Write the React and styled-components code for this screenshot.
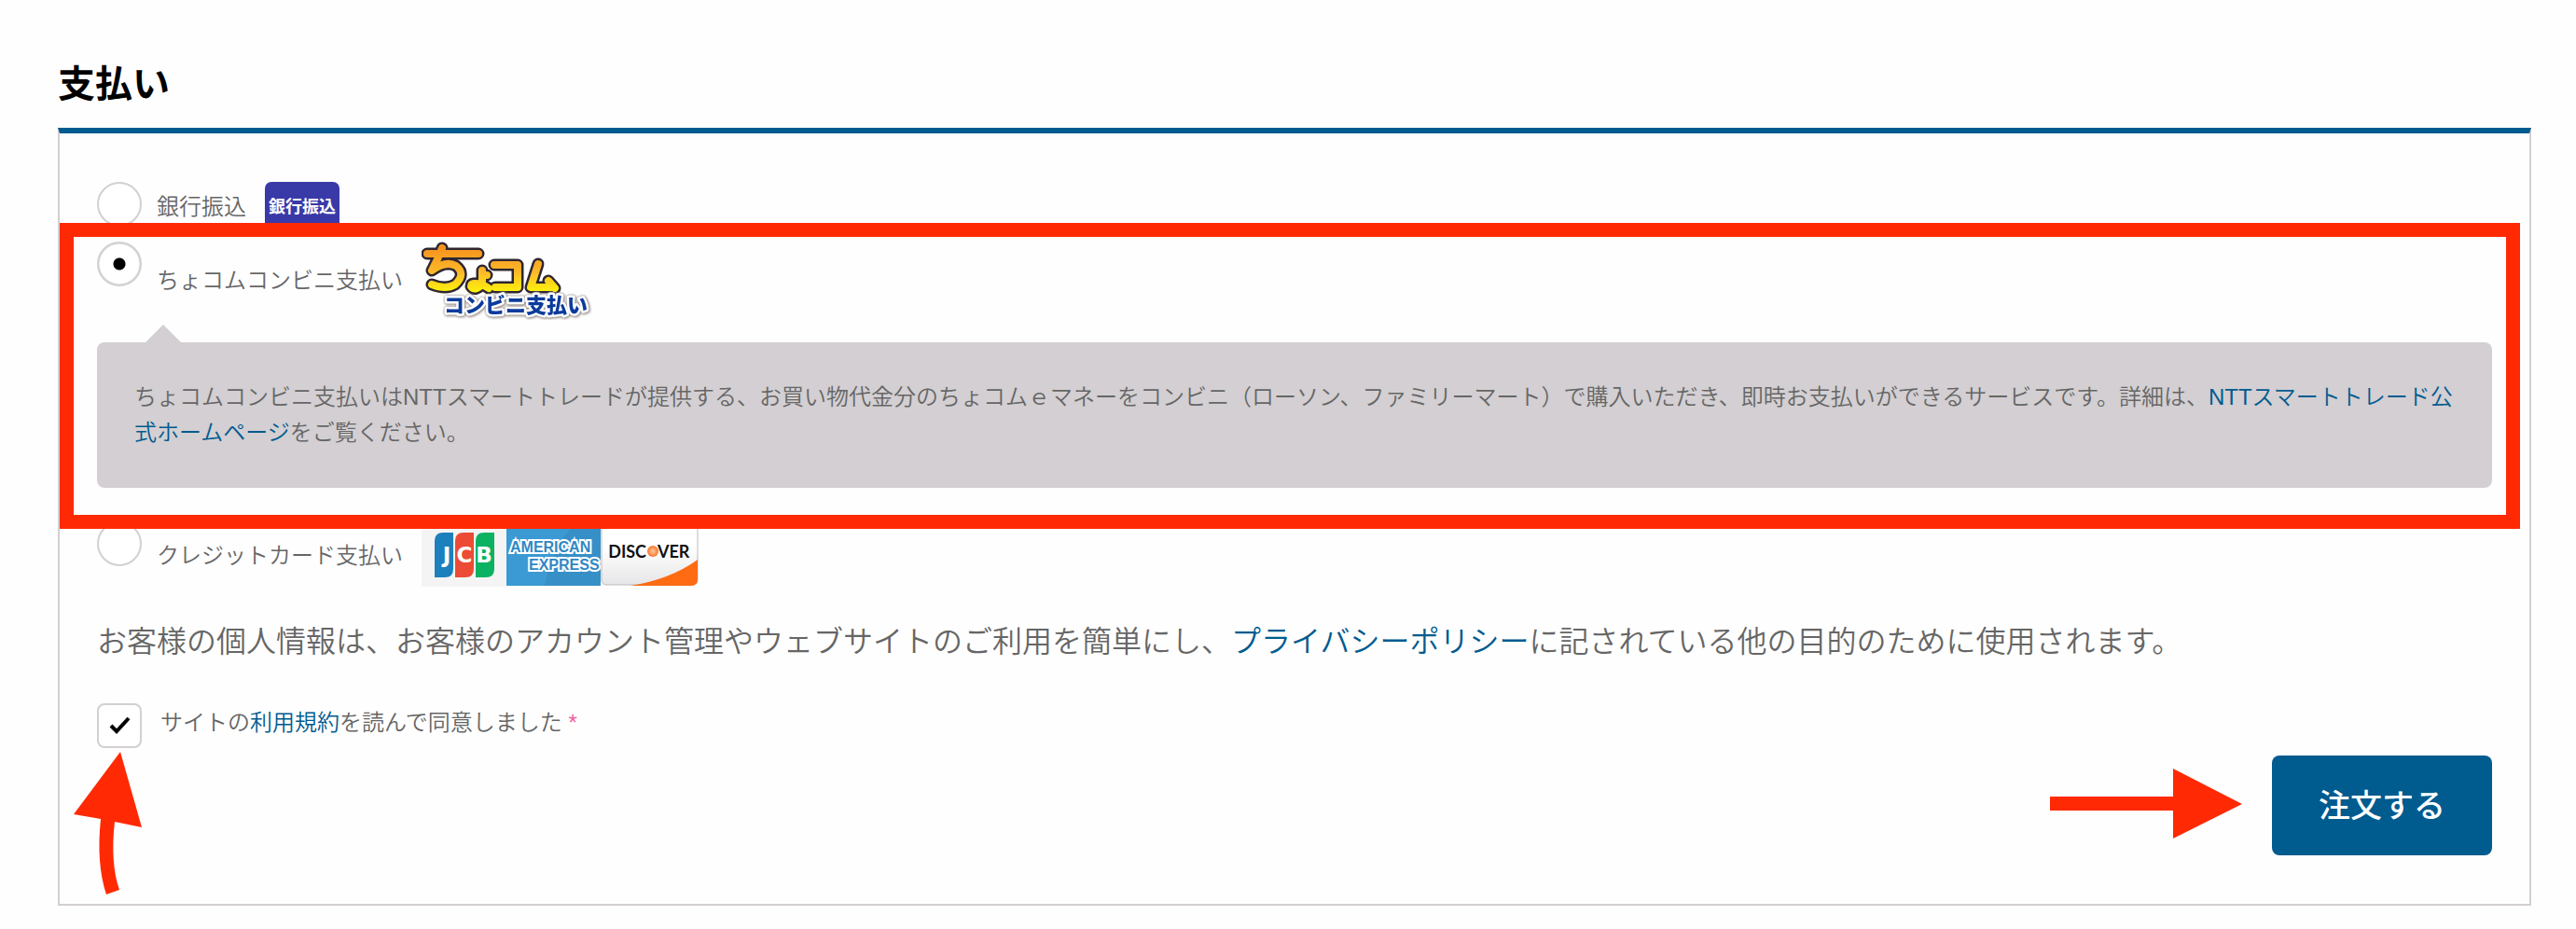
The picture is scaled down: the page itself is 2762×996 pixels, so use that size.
import React, { useState } from 'react';
import styled, { createGlobalStyle } from 'styled-components';

const GlobalStyle = createGlobalStyle`
  * {
    box-sizing: border-box;
  }
  body {
    margin: 0;
    background: #fefefe;
    color: #666;
    font-family: "Liberation Sans", "Noto Sans CJK JP", sans-serif;
    font-size: 24px;
    font-weight: 350;
    line-height: 38px;
  }
`;

const Page = styled.main`
  padding: 60px 48px 24px 62px;
`;

const Title = styled.h2`
  margin: 0 0 17px;
  color: #000;
  font-size: 40px;
  font-weight: 700;
  line-height: 60px;
`;

const Panel = styled.form`
  padding: 52px 40px;
  border: 2px solid #d3cfd2;
  border-top: 6px solid #005b8f;
`;

const Option = styled.div`
  position: relative;
  margin-bottom: ${props => props.$gap}px;
`;

const OptionRow = styled.div`
  display: flex;
  align-items: flex-start;
  gap: 16px;
`;

const OptionLabel = styled.label`
  display: flex;
  align-items: center;
  gap: 20px;
  > svg {
    display: block;
  }
`;

const Radio = styled.input`
  appearance: none;
  flex: none;
  width: 48px;
  height: 48px;
  margin: 0;
  border: 2px solid #d3cfd2;
  border-radius: 50%;
  background: #fff;
  &:checked {
    background: radial-gradient(circle, #000 6px, #fff 7px);
    box-shadow: inset 0 0 1px #777;
  }
`;

const Bubble = styled.div`
  position: relative;
  margin-top: 24px;
  padding: 40px;
  border-radius: 8px;
  background: #d3cfd2;
  > p {
    margin: 0;
  }
  &::before {
    content: "";
    position: absolute;
    top: -19px;
    left: 52px;
    border: 19px solid transparent;
    border-top: 0;
    border-bottom-color: #d3cfd2;
  }
`;

const Link = styled.a`
  color: #005b8f;
  text-decoration: none;
`;

const Highlight = styled.div`
  position: absolute;
  inset: -20px -30px -44px -40px;
  z-index: 1;
  border: 15px solid #ff2a04;
  pointer-events: none;
`;

const Cards = styled.span`
  display: flex;
  > svg {
    display: block;
  }
`;

const Privacy = styled.p`
  margin: 0 0 42px;
  font-size: 32px;
  line-height: 48px;
`;

const Agreement = styled.div`
  display: flex;
  align-items: flex-start;
  gap: 20px;
  margin-bottom: 8px;
`;

const AgreementLabel = styled.label`
  padding-top: 2px;
`;

const CheckWrap = styled.span`
  position: relative;
  flex: none;
  width: 48px;
  height: 48px;
`;

const Checkbox = styled.input`
  appearance: none;
  display: block;
  width: 100%;
  height: 100%;
  margin: 0;
  border: 2px solid #d3cfd2;
  border-radius: 8px;
  background: #fff;
`;

const CheckMark = styled.svg`
  position: absolute;
  top: 0;
  left: 0;
  pointer-events: none;
`;

const CurvedArrow = styled.svg`
  position: absolute;
  top: 52px;
  left: -26px;
  pointer-events: none;
`;

const Required = styled.span`
  color: #ef5b9c;
`;

const Actions = styled.div`
  display: flex;
  justify-content: flex-end;
  align-items: center;
  gap: 32px;
`;

const OrderButton = styled.button`
  height: 107px;
  padding: 0 50px 4px;
  border: 0;
  border-radius: 8px;
  background: #005b8f;
  color: #fff;
  font-family: inherit;
  font-size: 34px;
  font-weight: 500;
`;

const LogoCaption = styled.text`
  font-size: 22px;
  font-weight: 900;
  fill: #0b3b9c;
  stroke: #fff;
  stroke-width: 5px;
  stroke-linejoin: round;
  paint-order: stroke;
  filter: drop-shadow(0 0 1px #8c8480) drop-shadow(1px 1px 1px #a8a09c);
`;

const BankBadge = () => (
  <svg width="80" height="53" viewBox="0 0 80 53">
    <rect width="80" height="53" rx="7" fill="#3a39a8" />
    <text x="40" y="33" fontSize="18" fontWeight="700" fill="#fff" textAnchor="middle">銀行振込</text>
  </svg>
);

const ChocomLogo = () => (
  <svg width="184" height="84" viewBox="0 0 184 84">
    <defs>
      <linearGradient id="gold" gradientUnits="userSpaceOnUse" x1="0" y1="6" x2="0" y2="54">
        <stop offset="0" stopColor="#f7921e" />
        <stop offset="0.55" stopColor="#fbb829" />
        <stop offset="1" stopColor="#fdf20c" />
      </linearGradient>
    </defs>
    <g fill="none" strokeLinecap="round" strokeLinejoin="round">
      {[['#2e2630', 13], ['url(#gold)', 8]].map(([color, width]) => (
        <g key={color} stroke={color} strokeWidth={width}>
          <path d="M6 13H61M22 7Q17 20 11 31Q26 20 37 26Q48 35 36 46Q26 52 11 46" />
          <path d="M65 31V46Q53 43 53 48Q57 54 65 46M65 36H70M65 46Q69 48 72 50" />
          <path d="M78 25H103V49H79" />
          <path d="M125 24L117 49H142M136 42L143 50" />
        </g>
      ))}
    </g>
    <LogoCaption x="24" y="76">コンビニ支払い</LogoCaption>
  </svg>
);

const CardLogos = () => (
  <Cards>
    <svg width="91" height="74" viewBox="0 0 91 74">
      <rect width="91" height="70" fill="#f4f4f4" />
      <path d="M23 12H34V51Q34 60 25 60H14V21Q14 12 23 12Z" fill="#1c80bd" />
      <path d="M45 12H56V51Q56 60 47 60H36V21Q36 12 45 12Z" fill="#ec4b35" />
      <path d="M67 12H78V51Q78 60 69 60H58V21Q58 12 67 12Z" fill="#0bb262" />
      <g fontFamily="DejaVu Sans" fontSize="23" fontWeight="700" fill="#fff" textAnchor="middle">
        <text x="27" y="44">J</text>
        <text x="46" y="44">C</text>
        <text x="67" y="44">B</text>
      </g>
    </svg>
    <svg width="101" height="74" viewBox="0 0 101 74">
      <rect width="101" height="69" fill="#3b99d3" />
      <path d="M101 0V69H41Q50 24 76 0Z" fill="#378fc7" />
      <g fontSize="16" fontWeight="700" fill="#2f88c4" stroke="#fff" strokeWidth="4" paintOrder="stroke">
        <text x="4" y="33">AMERICAN</text>
        <text x="24" y="52">EXPRESS</text>
      </g>
    </svg>
    <svg width="105" height="74" viewBox="0 0 105 74">
      <defs>
        <linearGradient id="silver" x1="0" y1="0" x2="0" y2="1">
          <stop offset="0.4" stopColor="#fff" />
          <stop offset="1" stopColor="#e6e6e8" />
        </linearGradient>
        <radialGradient id="orange">
          <stop offset="0" stopColor="#ffc9a0" />
          <stop offset="1" stopColor="#f9752a" />
        </radialGradient>
      </defs>
      <rect x="1" y="1" width="103" height="67" rx="5" fill="url(#silver)" stroke="#bbb" />
      <path d="M104 41V62Q104 69 97 69H32Q75 62 104 41Z" fill="#ff6b12" />
      <g fontFamily="Lato" fontSize="18" fontWeight="700" fill="#111">
        <text x="49" y="39" textAnchor="end">DISC</text>
        <text x="61" y="39">VER</text>
      </g>
      <circle cx="56" cy="32" r="6" fill="url(#orange)" />
    </svg>
  </Cards>
);

export default function App() {
  const [method, setMethod] = useState('chocom');
  const [agreed, setAgreed] = useState(true);

  const radioProps = (value) => ({
    type: 'radio',
    name: 'payment',
    id: value,
    checked: method === value,
    onChange: () => setMethod(value),
  });

  return (
    <Page lang="ja">
      <GlobalStyle />
      <Title>支払い</Title>
      <Panel onSubmit={(e) => e.preventDefault()}>
        <Option $gap={11}>
          <OptionRow>
            <Radio {...radioProps('bank')} />
            <OptionLabel htmlFor="bank">銀行振込<BankBadge /></OptionLabel>
          </OptionRow>
        </Option>

        <Option $gap={36}>
          <OptionRow>
            <Radio {...radioProps('chocom')} />
            <OptionLabel htmlFor="chocom">ちょコムコンビニ支払い<ChocomLogo /></OptionLabel>
          </OptionRow>
          <Bubble>
            <p>
              ちょコムコンビニ支払いはNTTスマートトレードが提供する、お買い物代金分のちょコムｅマネーをコンビニ（ローソン、ファミリーマート）で購入いただき、即時お支払いができるサービスです。詳細は、<Link href="#ntt">NTTスマートトレード公式ホームページ</Link>をご覧ください。
            </p>
          </Bubble>
          <Highlight />
        </Option>

        <Option $gap={31}>
          <OptionRow>
            <Radio {...radioProps('card')} />
            <OptionLabel htmlFor="card">クレジットカード支払い<CardLogos /></OptionLabel>
          </OptionRow>
        </Option>

        <Privacy>
          お客様の個人情報は、お客様のアカウント管理やウェブサイトのご利用を簡単にし、<Link href="#privacy">プライバシーポリシー</Link>に記されている他の目的のために使用されます。
        </Privacy>

        <Agreement>
          <CheckWrap>
            <Checkbox type="checkbox" id="terms" checked={agreed} onChange={() => setAgreed(!agreed)} />
            {agreed && (
              <CheckMark width="48" height="48" viewBox="0 0 48 48">
                <path d="M15 24L21 30L34 16" fill="none" stroke="#000" strokeWidth="4" />
              </CheckMark>
            )}
            <CurvedArrow width="76" height="156" viewBox="0 0 76 156">
              <path d="M51 0L74 81L45 75Q40 119 50 148L36 153Q25 120 30 72L1 67Z" fill="#ff2a04" />
            </CurvedArrow>
          </CheckWrap>
          <AgreementLabel htmlFor="terms">
            サイトの<Link href="#terms">利用規約</Link>を読んで同意しました <Required>*</Required>
          </AgreementLabel>
        </Agreement>

        <Actions>
          <svg width="206" height="80" viewBox="0 0 206 80">
            <path d="M0 30H132V0L206 38L132 75V45H0Z" fill="#ff2a04" />
          </svg>
          <OrderButton type="submit">注文する</OrderButton>
        </Actions>
      </Panel>
    </Page>
  );
}
